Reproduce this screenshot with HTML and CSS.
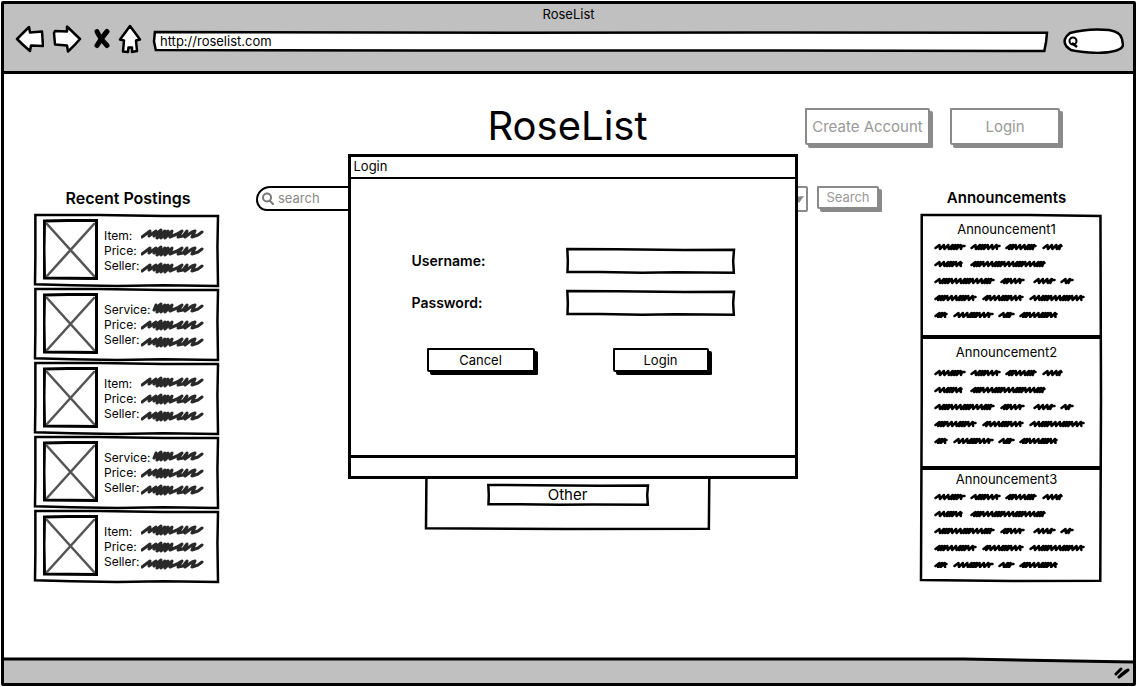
FILE: index.html
```html
<!DOCTYPE html>
<html lang="en">
<head>
<meta charset="utf-8">
<title>RoseList</title>
<link rel="stylesheet" href="styles.css">
<script src="scribble.js" defer></script>
</head>
<body>
<svg class="defs" aria-hidden="true">
  <symbol id="frame" viewBox="0 0 100 100" preserveAspectRatio="none" overflow="visible">
    <path d="M.2 0L35 0 70 1.500 100 1.500 99.700 45 100 100 70 99 45 100 20 99 0 97.500 .2 60Z"/>
  </symbol>
  <symbol id="frame-wide" viewBox="0 0 100 100" preserveAspectRatio="none" overflow="visible">
    <path d="M.1 0L40 4 70 3 100 4 99.900 50 99.700 100 70 97 30 97 .2 95 0 50Z"/>
  </symbol>
  <symbol id="frame-field" viewBox="0 0 100 100" preserveAspectRatio="none" overflow="visible">
    <path d="M.2 0L30 1 70 4 100 3 99.500 50 99.900 99 65 97 45 99 20 96 .3 96 .5 50Z"/>
  </symbol>
  <symbol id="frame-tall" viewBox="0 0 100 100" preserveAspectRatio="none" overflow="visible">
    <path d="M.4 0L60 0 99.700 .3 100 50 99.600 99.900 50 100 0 99.700 .4 50Z"/>
  </symbol>
  <symbol id="photo" viewBox="0 0 55 61">
    <path d="M1.500 2L25 1.500 53.500 1.500 53.500 59.500 1.500 59 1 30Z" fill="#fff" stroke="#000" stroke-width="3"/>
    <path d="M4 5L51 57M51 5L4 57" fill="none" stroke="#555" stroke-width="2.600" stroke-linecap="round"/>
  </symbol>
</svg>
<div class="window">
  <header class="chrome">
    <div class="chrome-title">RoseList</div>
    <div class="toolbar">
      <button class="nav back" aria-label="Back"><svg width="29" height="28" viewBox="0 0 29 28"><path d="M2 14L14 2 15 7.500 27 6.500 28 21 16 20.500 15 26Q8 20 2 14Z"/></svg></button>
      <button class="nav forward" aria-label="Forward"><svg width="30" height="28" viewBox="0 0 30 28"><path d="M28 14L15 1.500 15 6.500 3 6 2 8 3 19.500 15 20.500 16 26.500Q23 20 28 14Z"/></svg></button>
      <button class="nav stop" aria-label="Stop"><svg width="18" height="22" viewBox="0 0 18 22"><path d="M4 3.500Q6 9 14 17.500M14 3.500Q10 8 4 17.500"/></svg></button>
      <button class="nav home" aria-label="Home"><svg width="24" height="30" viewBox="0 0 24 30"><path d="M12 2L22 15.500 18 16.500 19 27 14 28 14 23.500 10.500 23.500 10 28 5 27.500 6 16.500 2 15.500Q7 9 12 2Z"/></svg></button>
      <div class="address sketch"><svg class="outline" aria-hidden="true"><use href="#frame-wide"/></svg><input type="text" aria-label="Address" value="http://roselist.com"></div>
      <label class="find">
        <svg class="find-shape" viewBox="0 0 61 26" aria-hidden="true"><path d="M7 5Q25 0 46 2Q58 4 59 11L60 17Q59 24 35 25Q15 24 8 22Q0 17 2 11Q3 8 7 5Z" fill="#fff" stroke="#000" stroke-width="2.500"/><circle cx="10" cy="13" r="3.500" fill="none" stroke="#000" stroke-width="2"/><path d="M9 15L14 19" stroke="#000" stroke-width="2.500"/></svg>
        <input type="search" aria-label="Find">
      </label>
    </div>
  </header>

  <main class="page">
    <div class="masthead">
      <h1>RoseList</h1>
      <div class="actions">
        <button class="btn muted create">Create Account</button>
        <button class="btn muted signin">Login</button>
      </div>
    </div>

    <div class="columns">
      <section class="postings">
        <h2>Recent Postings</h2>
        <article class="card sketch"><svg class="outline" aria-hidden="true"><use href="#frame"/></svg><svg class="photo"><use href="#photo"/></svg><ul><li>Item:</li><li>Price:</li><li>Seller:</li></ul><svg class="values" width="63" height="46" data-lines="0-62|0-62|0-62"></svg></article>
        <article class="card sketch"><svg class="outline" aria-hidden="true"><use href="#frame"/></svg><svg class="photo"><use href="#photo"/></svg><ul><li>Service:</li><li>Price:</li><li>Seller:</li></ul><svg class="values" width="63" height="46" data-lines="13-62|0-62|0-62"></svg></article>
        <article class="card sketch"><svg class="outline" aria-hidden="true"><use href="#frame"/></svg><svg class="photo"><use href="#photo"/></svg><ul><li>Item:</li><li>Price:</li><li>Seller:</li></ul><svg class="values" width="63" height="46" data-lines="0-62|0-62|0-62"></svg></article>
        <article class="card sketch"><svg class="outline" aria-hidden="true"><use href="#frame"/></svg><svg class="photo"><use href="#photo"/></svg><ul><li>Service:</li><li>Price:</li><li>Seller:</li></ul><svg class="values" width="63" height="46" data-lines="13-62|0-62|0-62"></svg></article>
        <article class="card sketch"><svg class="outline" aria-hidden="true"><use href="#frame"/></svg><svg class="photo"><use href="#photo"/></svg><ul><li>Item:</li><li>Price:</li><li>Seller:</li></ul><svg class="values" width="63" height="46" data-lines="0-62|0-62|0-62"></svg></article>
      </section>

      <section class="browse">
        <form class="search-row">
          <label class="search-box">
            <svg width="12" height="13" viewBox="0 0 12 13" aria-hidden="true"><circle cx="5" cy="5.500" r="4" fill="none" stroke="#777" stroke-width="2"/><path d="M8 9L11 12" stroke="#777" stroke-width="2" stroke-linecap="round"/></svg>
            <input type="search" placeholder="search" aria-label="Search listings">
          </label>
          <div class="picker"><select aria-label="Category"><option></option></select><svg width="10" height="7" viewBox="0 0 10 7" aria-hidden="true"><path d="M0 1L10 0 5 7Z" fill="#888"/></svg></div>
          <button class="btn muted go" type="button">Search</button>
        </form>
        <div class="categories sketch"><svg class="outline" aria-hidden="true"><use href="#frame-tall"/></svg>
          <button class="category sketch"><svg class="outline" aria-hidden="true"><use href="#frame-field"/></svg><span>Other</span></button>
        </div>
      </section>

      <section class="news">
        <h2>Announcements</h2>
        <div class="news-list sketch"><svg class="outline" aria-hidden="true"><use href="#frame-tall"/></svg>
          <article class="note first"><h3>Announcement1</h3><svg class="prose" width="153" height="78"></svg></article>
          <article class="note second"><h3>Announcement2</h3><svg class="prose" width="153" height="78"></svg></article>
          <article class="note third"><h3>Announcement3</h3><svg class="prose" width="153" height="78"></svg></article>
        </div>
      </section>
    </div>

    <div class="dialog" role="dialog" aria-labelledby="dialog-title">
      <div class="dialog-title" id="dialog-title">Login</div>
      <form class="dialog-body">
        <div class="fields">
          <label for="user">Username:</label>
          <div class="field sketch"><svg class="outline" aria-hidden="true"><use href="#frame-field"/></svg><input id="user" type="text"></div>
          <label for="pass">Password:</label>
          <div class="field sketch"><svg class="outline" aria-hidden="true"><use href="#frame-field"/></svg><input id="pass" type="password"></div>
        </div>
        <div class="dialog-buttons">
          <button class="btn cancel" type="button">Cancel</button>
          <button class="btn submit" type="button">Login</button>
        </div>
      </form>
      <div class="dialog-foot"></div>
    </div>
  </main>

  <footer class="status">
    <svg class="status-line" viewBox="0 0 100 6" preserveAspectRatio="none" aria-hidden="true"><path d="M0 2L50 2 85 2 100 5V0H0Z" fill="#fff"/><path d="M0 2L50 2 85 2 100 5" fill="none" stroke="#000" stroke-width="3" vector-effect="non-scaling-stroke"/></svg>
    <svg width="16" height="14" viewBox="0 0 16 14" aria-hidden="true"><path d="M2 8L7 3M5 11L14 4M7 9L12 5" stroke="#000" stroke-width="3" stroke-linecap="round"/></svg>
  </footer>
</div>
</body>
</html>
```
FILE: styles.css
```css
* { box-sizing: border-box; }
body {
  margin: 0;
  padding: 1px;
  background: #fff;
  color: #000;
  font: 12px/15px Inter, "Liberation Sans", sans-serif;
}
h1, h2, h3, ul { margin: 0; padding: 0; font-weight: 400; }
ul { list-style: none; }
button, input, select { font: inherit; color: inherit; }
input { width: 100%; border: 0; outline: 0; padding: 0; background: transparent; }
button { padding: 0; border: 0; background: transparent; }
svg { display: block; flex: none; }
.defs { position: absolute; width: 0; height: 0; }

.sketch { position: relative; }
.outline {
  position: absolute;
  inset: 1px;
  width: calc(100% - 2px);
  height: calc(100% - 2px);
  overflow: visible;
  fill: #fff;
  stroke: #000;
  stroke-width: 2.5px;
  pointer-events: none;
}
.defs path { vector-effect: non-scaling-stroke; }
.outline ~ * { position: relative; }

.window {
  display: flex;
  flex-direction: column;
  min-height: calc(100vh - 2px);
  border: 3px solid #000;
  border-radius: 2px;
}
.chrome { height: 70px; background: #c0c0c0; border-bottom: 3px solid #000; font-size: 13px; }
.chrome-title { padding-top: 2px; text-align: center; line-height: 16px; }
.toolbar { display: flex; align-items: center; padding: 0 9px 0 11px; height: 33px; }
.nav svg { fill: #fff; stroke: #000; stroke-width: 2.5; stroke-linejoin: round; }
.forward { margin-left: 8px; }
.stop { margin-left: 11px; }
.stop svg { fill: none; stroke-width: 5; stroke-linecap: round; }
.home { margin-left: 7px; }
.address { flex: 1; height: 21px; margin: 5px 15px 0 11px; padding: 0 7px; }
.address input { display: block; height: 20px; }
.find { position: relative; width: 61px; height: 26px; margin-top: 4px; }
.find-shape { position: absolute; width: 100%; height: 100%; }
.find input { position: relative; height: 24px; padding-left: 18px; }

.page { position: relative; flex: 1; padding: 34px 31px 24px 30px; }
.masthead { display: grid; grid-template-columns: 1fr auto 1fr; align-items: start; height: 73px; padding-right: 1px; }
.masthead h1 { grid-column: 2; font-size: 40px; line-height: 36px; }
.actions { display: flex; justify-content: flex-end; gap: 20px; padding-right: 41px; }
.btn {
  border: 2px solid #000;
  background: #fff;
  box-shadow: 3px 3px #000;
  border-radius: 1px 2px 1px 2px;
  white-space: nowrap;
}
.muted { color: #999; border-color: #8a8a8a; box-shadow: 3px 3px #8a8a8a; }
.create, .signin { height: 37px; font-size: 15px; }
.create { width: 125px; }
.signin { width: 110px; }

.columns { display: grid; grid-template-columns: 185px 1fr 182px; }
h2 { height: 33px; padding-top: 7px; text-align: center; font-size: 16px; line-height: 20px; font-weight: 600; }
.postings h2 { padding-left: 3px; }
.news h2 { padding-right: 9px; font-size: 15px; }
.card { display: flex; height: 73px; margin-bottom: 1px; padding: 5px 9px; }
.photo { width: 55px; height: 61px; }
.card ul { width: 37px; margin: 9px 0 0 6px; white-space: nowrap; }
.values { margin-top: 9px; fill: none; stroke: #292929; stroke-width: 3; stroke-linecap: round; stroke-linejoin: round; }

.browse { padding: 5px 41px 0 37px; }
.search-row { display: flex; gap: 9px; align-items: flex-start; }
.search-box {
  display: flex;
  flex: 1;
  align-items: center;
  gap: 4px;
  height: 25px;
  padding-left: 4px;
  border: 2px solid #000;
  border-radius: 18px 12px 12px 14px;
}
.search-box input { font-size: 13px; color: #777; }
.search-box input::placeholder { color: #888; opacity: 1; }
.picker { display: flex; align-items: center; width: 120px; height: 26px; margin-left: 8px; padding-right: 2px; border: 2px solid #8a8a8a; border-radius: 2px; }
.picker select { flex: 1; border: 0; appearance: none; background: transparent; }
.go { width: 62px; height: 23px; font-size: 13px; }
.categories { display: flex; align-items: flex-end; justify-content: center; width: 286px; height: 279px; margin: 39px auto 0; padding-bottom: 24px; }
.category { width: 162px; height: 22px; font-size: 15px; line-height: 18px; }

.news-list { padding: 3px; }
.note { padding: 4px 0 0 13px; border-bottom: 4px solid #000; margin: 0 -2px; }
.note h3 { padding-right: 22px; text-align: center; font-size: 13px; line-height: 16px; }
.prose { margin-top: 3px; fill: none; stroke: #000; stroke-width: 2.5; stroke-linecap: round; stroke-linejoin: round; }
.first { height: 122px; }
.second { height: 131px; padding-top: 5px; }
.second .prose { margin-top: 6px; }
.third { height: 109px; padding-top: 1px; border-bottom: 0; }

.dialog {
  position: absolute;
  top: 80px;
  left: calc(50% - 221px);
  display: flex;
  flex-direction: column;
  width: 450px;
  height: 325px;
  border: 3px solid #000;
  background: #fff;
}
.dialog-title { height: 22px; padding: 1px 3px; border-bottom: 2px solid #000; font-size: 13px; line-height: 16px; }
.dialog-body { flex: 1; padding: 69px 60px 0 61px; }
.fields { display: grid; grid-template-columns: 1fr 169px; row-gap: 16px; align-items: center; font-size: 14px; line-height: 26px; font-weight: 600; }
.field { height: 26px; }
.field input { display: block; height: 24px; padding: 0 5px; }
.dialog-buttons { display: flex; justify-content: space-between; padding: 32px 26px 0 15px; font-size: 13px; }
.cancel, .submit { height: 24px; line-height: 18px; }
.cancel { width: 108px; }
.submit { width: 96px; }
.dialog-foot { height: 21px; border-top: 3px solid #000; }

.status { position: relative; display: flex; justify-content: flex-end; height: 25px; padding: 8px 3px 0; background: #c0c0c0; }
.status-line { position: absolute; top: -1px; left: 0; width: 100%; height: 6px; overflow: visible; }
```
FILE: scribble.js
```js
// Draws handwriting-like scribbles in place of body copy.
const addPath = (svg, d) => {
  const path = document.createElementNS('http://www.w3.org/2000/svg', 'path');
  path.setAttribute('d', d);
  svg.append(path);
};

const prose = [
  [[0, 32], [36, 67], [71, 103], [108, 129]],
  [[0, 29], [36, 112]],
  [[0, 61], [66, 91], [99, 122], [126, 140]],
  [[0, 43], [48, 90], [95, 151]],
  [[0, 14], [19, 60], [64, 81], [85, 124]],
];

// Short up-and-down strokes; the pitch alternates between loose and dense runs.
const word = (from, to, y, seed) => {
  let x = from + 1.5;
  let d = `M${x} ${y + 1}`;
  for (let i = seed; x < to - 6; i++) {
    const dense = Math.floor(i / 3) % 2;
    d += `L${x + 4} ${y - 2}`;
    x += dense ? 2.6 : 4.4;
    d += `L${x} ${y + 2}`;
  }
  return `${d}L${to - 4} ${y - 1}L${to - 1.5} ${y - 1}`;
};

// Bold looping scrawl: offsets are strokes over a 62px run.
const scrawl = (from, y) => {
  const points = [
    [1, 3], [9, -3], [8, 2], [15, -3], [13, 2], [20, -4], [16, 4], [24, -3], [20, 4],
    [27, -3], [24, 4], [31, -3], [29, 3], [36, 0], [41, -3], [37, 3], [42, 2], [46, -3],
    [44, 3], [51, -2], [54, -3], [51, 3], [57, 1], [61, -2],
  ].filter(([x]) => x >= from);
  return `M${points.map(([x, dy]) => `${x} ${y + dy}`).join('L')}`;
};

document.querySelectorAll('.prose').forEach((svg) => {
  prose.forEach((line, row) => {
    line.forEach(([from, to], i) => addPath(svg, word(from, to, 7 + row * 17, row + i * 2)));
  });
});

document.querySelectorAll('.values').forEach((svg) => {
  svg.dataset.lines.split('|').forEach((range, row) => {
    addPath(svg, scrawl(parseInt(range, 10), 6 + row * 17));
  });
});
```
